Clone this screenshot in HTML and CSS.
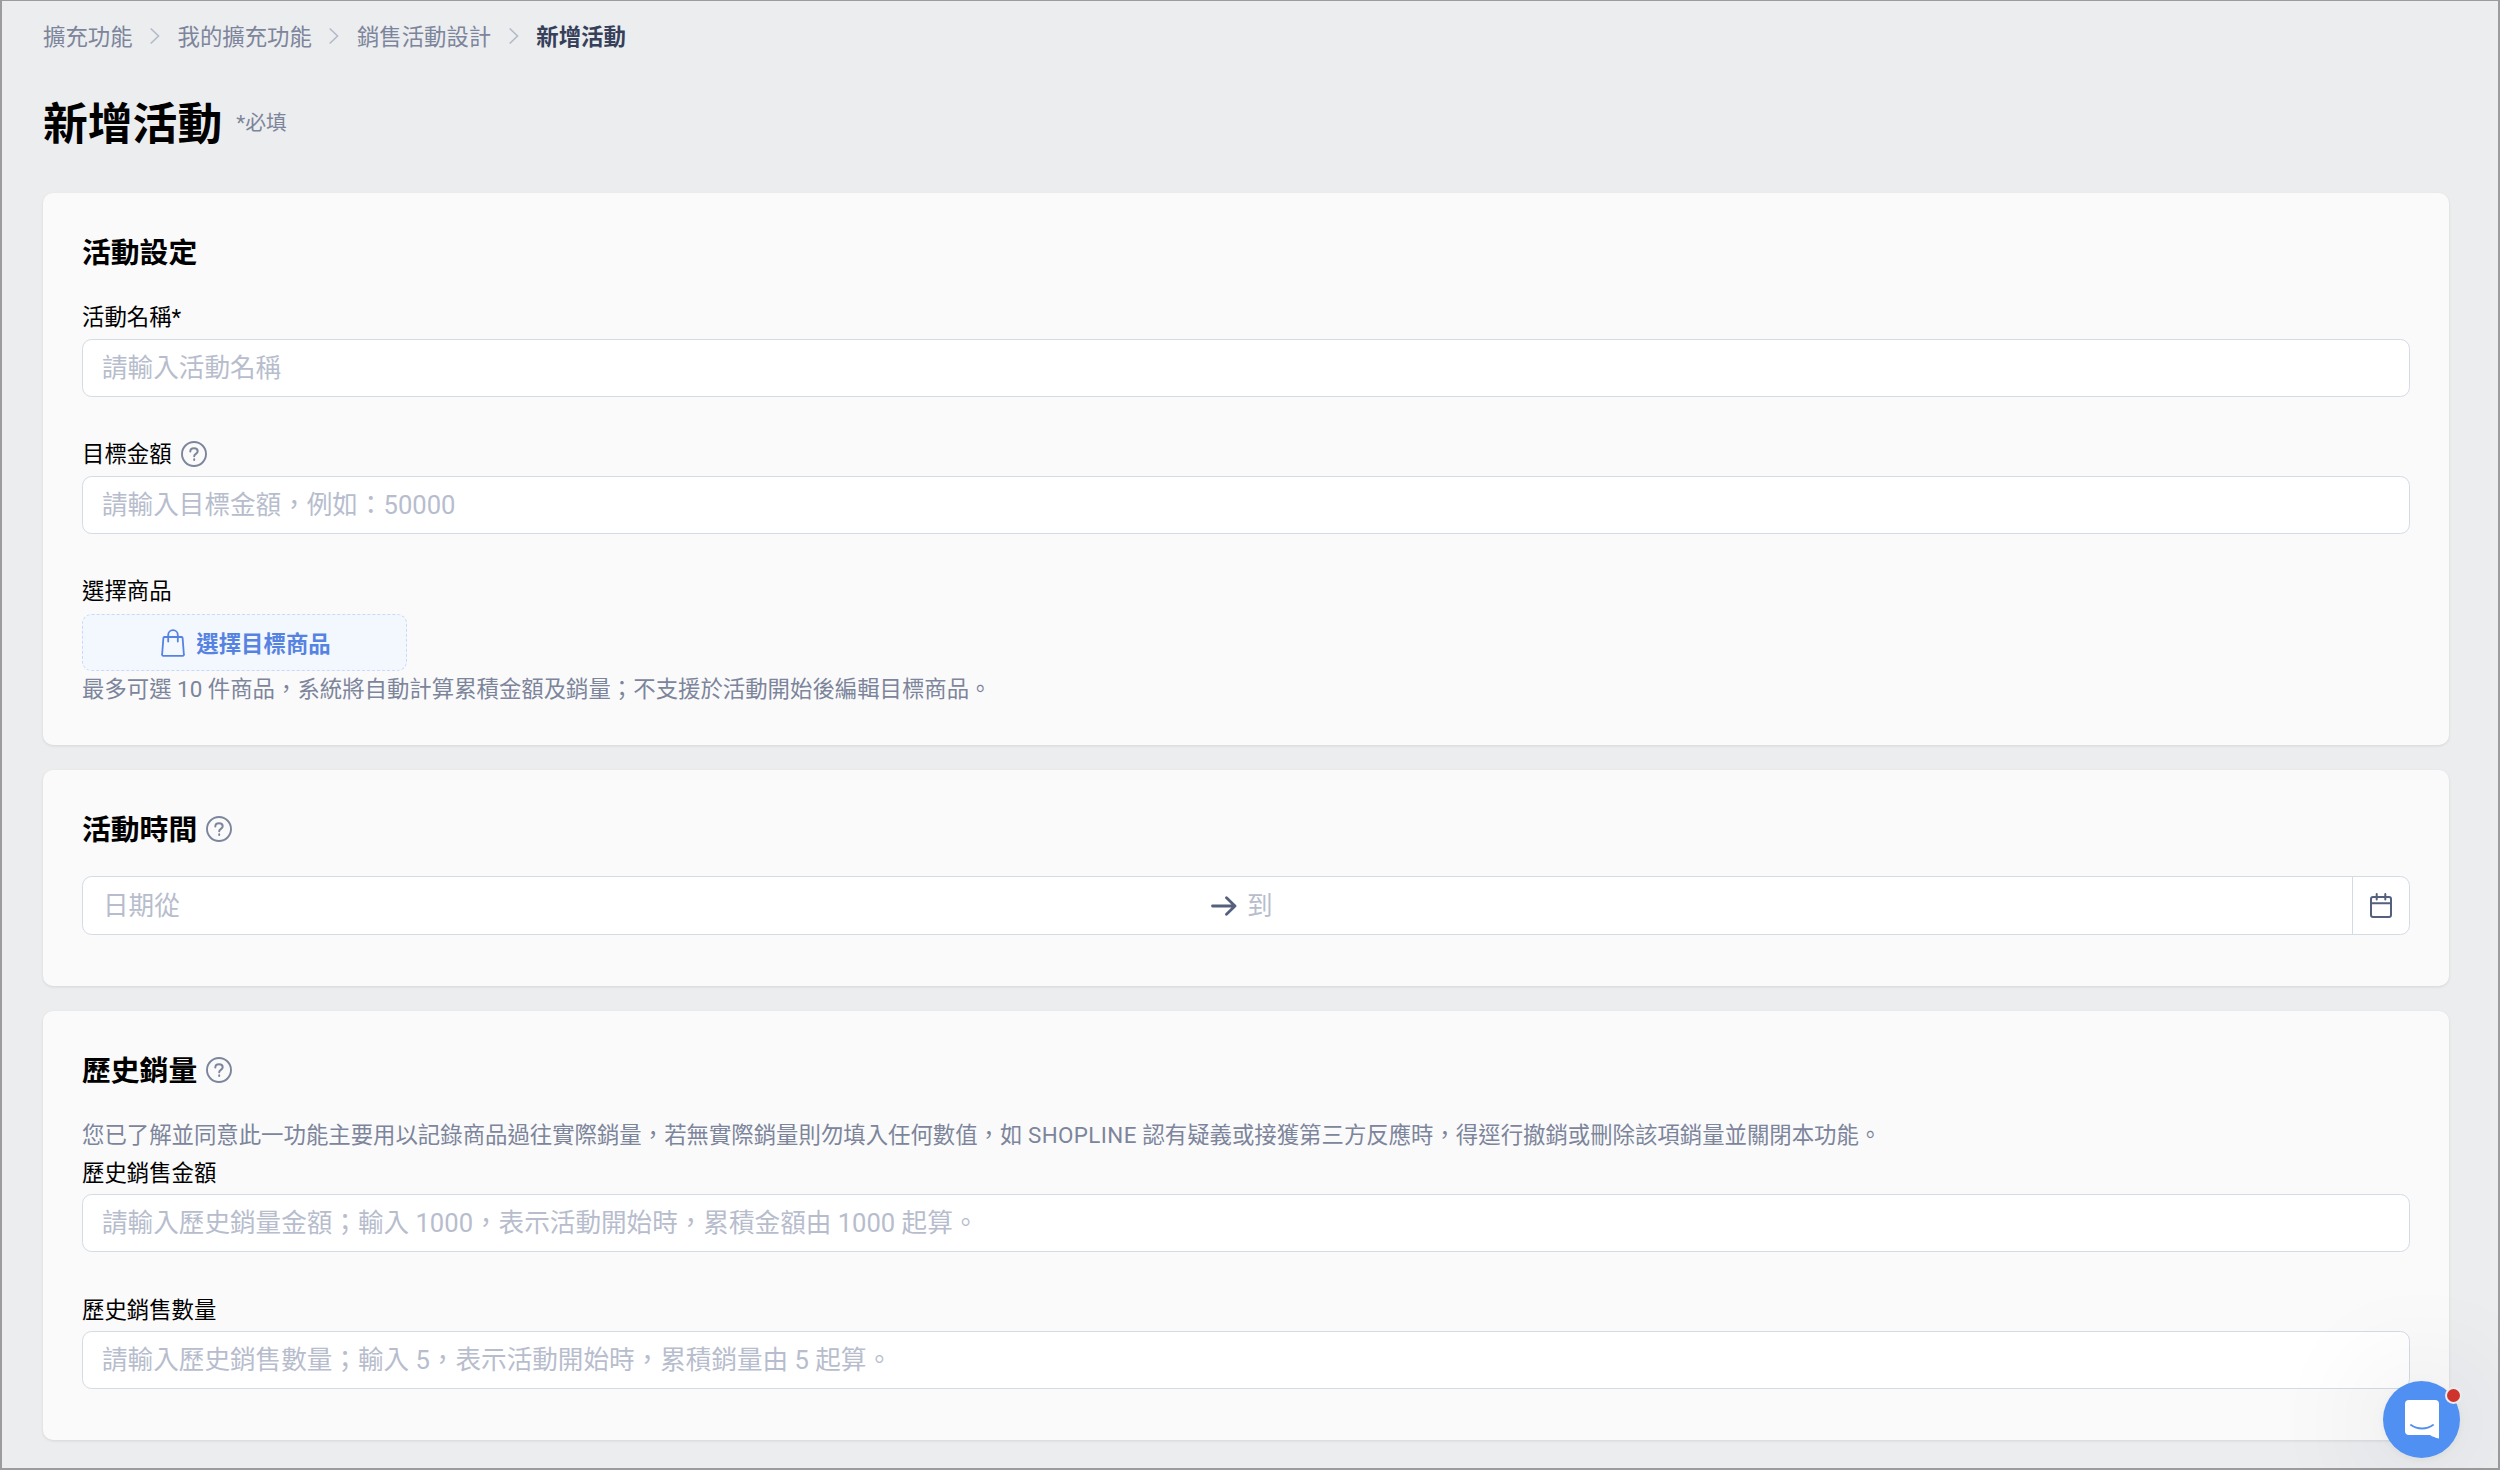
FILE: index.html
```html
<!DOCTYPE html>
<html lang="zh-Hant">

<head>
  <meta charset="UTF-8">
  <title>新增活動</title>
  <link rel="stylesheet" href="styles.css">
</head>
<body>
  <svg class="sprite">
    <symbol id="help" viewBox="0 0 26 26">
      <circle cx="13" cy="13" r="12" stroke-width="1.9" />
      <path d="M9.3 10.6C9.3 8.3 10.9 7.2 13 7.2s3.7 1.2 3.7 3.1c0 2.7-3.5 2.5-3.5 5" stroke-width="2" />
      <path d="M13.2 18.3v.6" stroke-width="2" />
    </symbol>
    <symbol id="chevron" viewBox="0 0 10 16">
      <path d="M1.200 1L8.600 8l-7.400 7" stroke-width="1.7" />
    </symbol>
  </svg>

  <div class="page">
    <nav class="breadcrumb">
      <a>擴充功能</a>
      <svg class="chevron"><use href="#chevron" /></svg>
      <a>我的擴充功能</a>
      <svg class="chevron"><use href="#chevron" /></svg>
      <a>銷售活動設計</a>
      <svg class="chevron"><use href="#chevron" /></svg>
      <b>新增活動</b>
    </nav>

    <header class="title">
      <h1>新增活動</h1>
      <span>*必填</span>
    </header>

    <!-- 活動設定 -->
    <section class="card">
      <h2>活動設定</h2>
      <div class="field">
        <label>活動名稱*</label>
        <div class="input">請輸入活動名稱</div>
      </div>
      <div class="field">
        <label>目標金額 <svg class="help"><use href="#help" /></svg></label>
        <div class="input">請輸入目標金額，例如：50000</div>
      </div>
      <div class="field">
        <label>選擇商品</label>
        <button class="pick" type="button">
          <svg class="bag" viewBox="0 0 24 28">
            <path d="M3.4 8h17.2a1 1 0 0 1 1 .9l1.3 16.8a1 1 0 0 1-1 1.1H2.1a1 1 0 0 1-1-1.1L2.4 8.9a1 1 0 0 1 1-.9z" />
            <path d="M7.2 12.5V6a4.8 4.8 0 0 1 9.6 0v6.5" />
          </svg>
          選擇目標商品
        </button>
        <p class="note">最多可選 10 件商品，系統將自動計算累積金額及銷量；不支援於活動開始後編輯目標商品。</p>
      </div>
    </section>

    <!-- 活動時間 -->
    <section class="card card-time">
      <h2>活動時間 <svg class="help"><use href="#help" /></svg></h2>
      <div class="range">
        <div class="from">日期從</div>
        <svg class="arrow" viewBox="0 0 26 20">
          <path d="M1.5 10H24M15.5 1.8L24 10l-8.500 8.2" />
        </svg>
        <div class="to">到</div>
        <div class="calendar">
          <svg viewBox="0 0 22 25">
            <rect x="1" y="4" width="20" height="20" rx="2" />
            <path d="M1 10.300h20M6.700 1v5.500M15.300 1v5.500" />
          </svg>
        </div>
      </div>
    </section>

    <!-- 歷史銷量 -->
    <section class="card card-history">
      <h2>歷史銷量 <svg class="help"><use href="#help" /></svg></h2>
      <p class="note">您已了解並同意此一功能主要用以記錄商品過往實際銷量，若無實際銷量則勿填入任何數值，如 <span class="brand">SHOPLINE</span> 認有疑義或接獲第三方反應時，得逕行撤銷或刪除該項銷量並關閉本功能。</p>
      <div class="field">
        <label>歷史銷售金額</label>
        <div class="input">請輸入歷史銷量金額；輸入 1000，表示活動開始時，累積金額由 1000 起算。</div>
      </div>
      <div class="field">
        <label>歷史銷售數量</label>
        <div class="input">請輸入歷史銷售數量；輸入 5，表示活動開始時，累積銷量由 5 起算。</div>
      </div>
    </section>
  </div>

  <div class="chat">
    <svg viewBox="0 0 34 39">
      <path class="bubble" d="M4 0h26a4 4 0 0 1 4 4v34.500c-3.500-.6-6.500-1.900-9-3.500H4a4 4 0 0 1-4-4V4a4 4 0 0 1 4-4z" />
      <path class="smile" d="M6 25c6.500 4.600 15.500 4.600 22 0" />
    </svg>
    <i class="dot"></i>
  </div>
</body>
</html>
```

FILE: styles.css
```css
* {
  margin: 0;
  padding: 0;
  box-sizing: border-box;
}

body {
  height: 1470px;
  border: 2px solid #9c9c9e;
  border-top-width: 1px;
  background: #ecedef;
  color: #000;
  font-family: Roboto, "Noto Sans CJK TC", sans-serif;
  font-size: 22.4px;
  overflow: hidden;
}

svg {
  display: block;
  flex: none;
  fill: none;
  stroke: currentColor;
  stroke-linecap: round;
  stroke-linejoin: round;
}

.sprite {
  position: absolute;
  width: 0;
  height: 0;
}

.page {
  padding: 16px 49px 0 41px;
}

.breadcrumb {
  display: flex;
  align-items: center;
  height: 36px;
  color: #7c859b;
}

.breadcrumb a,
.breadcrumb b {
  padding-bottom: 1px;
}

.breadcrumb b {
  color: #36405a;
  font-weight: 700;
}

.chevron {
  width: 10px;
  height: 16px;
  margin: 2px 17.5px 0;
  color: #b3bac9;
}

.title {
  display: flex;
  align-items: center;
  gap: 14px;
  height: 139.5px;
  padding-bottom: 3px;
}

.title h1 {
  padding-bottom: 2px;
  font-size: 44.8px;
  font-weight: 700;
}

.title span {
  color: #7c859b;
  font-size: 20.8px;
}

.card {
  height: 552px;
  margin-bottom: 25.5px;
  padding: 36px 39px 0;
  border-radius: 10px;
  background: #fafafa;
  box-shadow: 0 1px 3px rgba(0, 0, 0, .1);
}

.card-time {
  height: 215.5px;
}

.card-history {
  height: 429px;
}

h2 {
  display: flex;
  align-items: center;
  gap: 9px;
  height: 46px;
  padding-bottom: 3px;
  font-size: 28.8px;
  font-weight: 700;
}

.help {
  width: 26px;
  height: 26px;
  margin-top: 3px;
  color: #7c859b;
}

.field {
  height: 137.2px;
}

h2 + .field {
  margin-top: 24px;
}

.field label {
  display: flex;
  align-items: center;
  gap: 9px;
  height: 40px;
  padding-bottom: 7px;
}

.input {
  height: 58px;
  padding: 0 19px;
  border: 1px solid #d3dce5;
  border-radius: 9.6px;
  background: #fff;
  color: #b7bdcd;
  font-size: 25.6px;
  line-height: 56px;
}

.pick {
  display: flex;
  align-items: center;
  justify-content: center;
  gap: 11px;
  width: 325px;
  height: 57px;
  margin-top: 1px;
  padding: 0 0 1px 3px;
  border: 1px dashed #c8d9fa;
  border-radius: 9.6px;
  background: #f3f8ff;
  color: #5683e2;
  font: inherit;
  font-weight: 700;
}

.bag {
  width: 24px;
  height: 28px;
  margin-top: 2px;
  stroke-width: 1.8;
}

.note {
  color: #7c859b;
  line-height: 36px;
  white-space: nowrap;
}

.brand {
  letter-spacing: .4px;
}

.range {
  display: flex;
  align-items: center;
  height: 59px;
  margin-top: 24px;
  border: 1px solid #d3dce5;
  border-radius: 9.6px;
  background: #fff;
  color: #b7bdcd;
  font-size: 25.6px;
  line-height: 56px;
}

.from {
  width: 1128px;
  padding-left: 20px;
}

.arrow {
  width: 26px;
  height: 20px;
  color: #55607f;
  stroke-width: 2.8;
}

.to {
  flex: 1;
  padding-left: 10px;
}

.calendar {
  display: flex;
  align-items: center;
  justify-content: center;
  width: 57px;
  height: 57px;
  border-left: 1px solid #d3dce5;
}

.calendar svg {
  width: 22px;
  height: 25px;
  color: #55607f;
  stroke-width: 2;
}

.card-history .note {
  margin-top: 24px;
}

.card-history .note + .field {
  margin-top: 1px;
}

/* 客服浮動按鈕 */
.chat {
  position: fixed;
  right: 40px;
  bottom: 12px;
  display: flex;
  align-items: center;
  justify-content: center;
  width: 77px;
  height: 77px;
  border-radius: 50%;
  background: #5190f3;
  box-shadow: 0 2px 10px rgba(0, 0, 0, .06), 0 3px 120px rgba(30, 35, 60, .16);
}

.chat svg {
  width: 34px;
  height: 39px;
}

.bubble {
  fill: #fff;
  stroke: none;
}

.smile {
  stroke: #5190f3;
  stroke-width: 2;
}

.dot {
  position: absolute;
  top: 6px;
  right: -2px;
  width: 17px;
  height: 17px;
  border: 2px solid #ececee;
  border-radius: 50%;
  background: #cf342c;
}
```
